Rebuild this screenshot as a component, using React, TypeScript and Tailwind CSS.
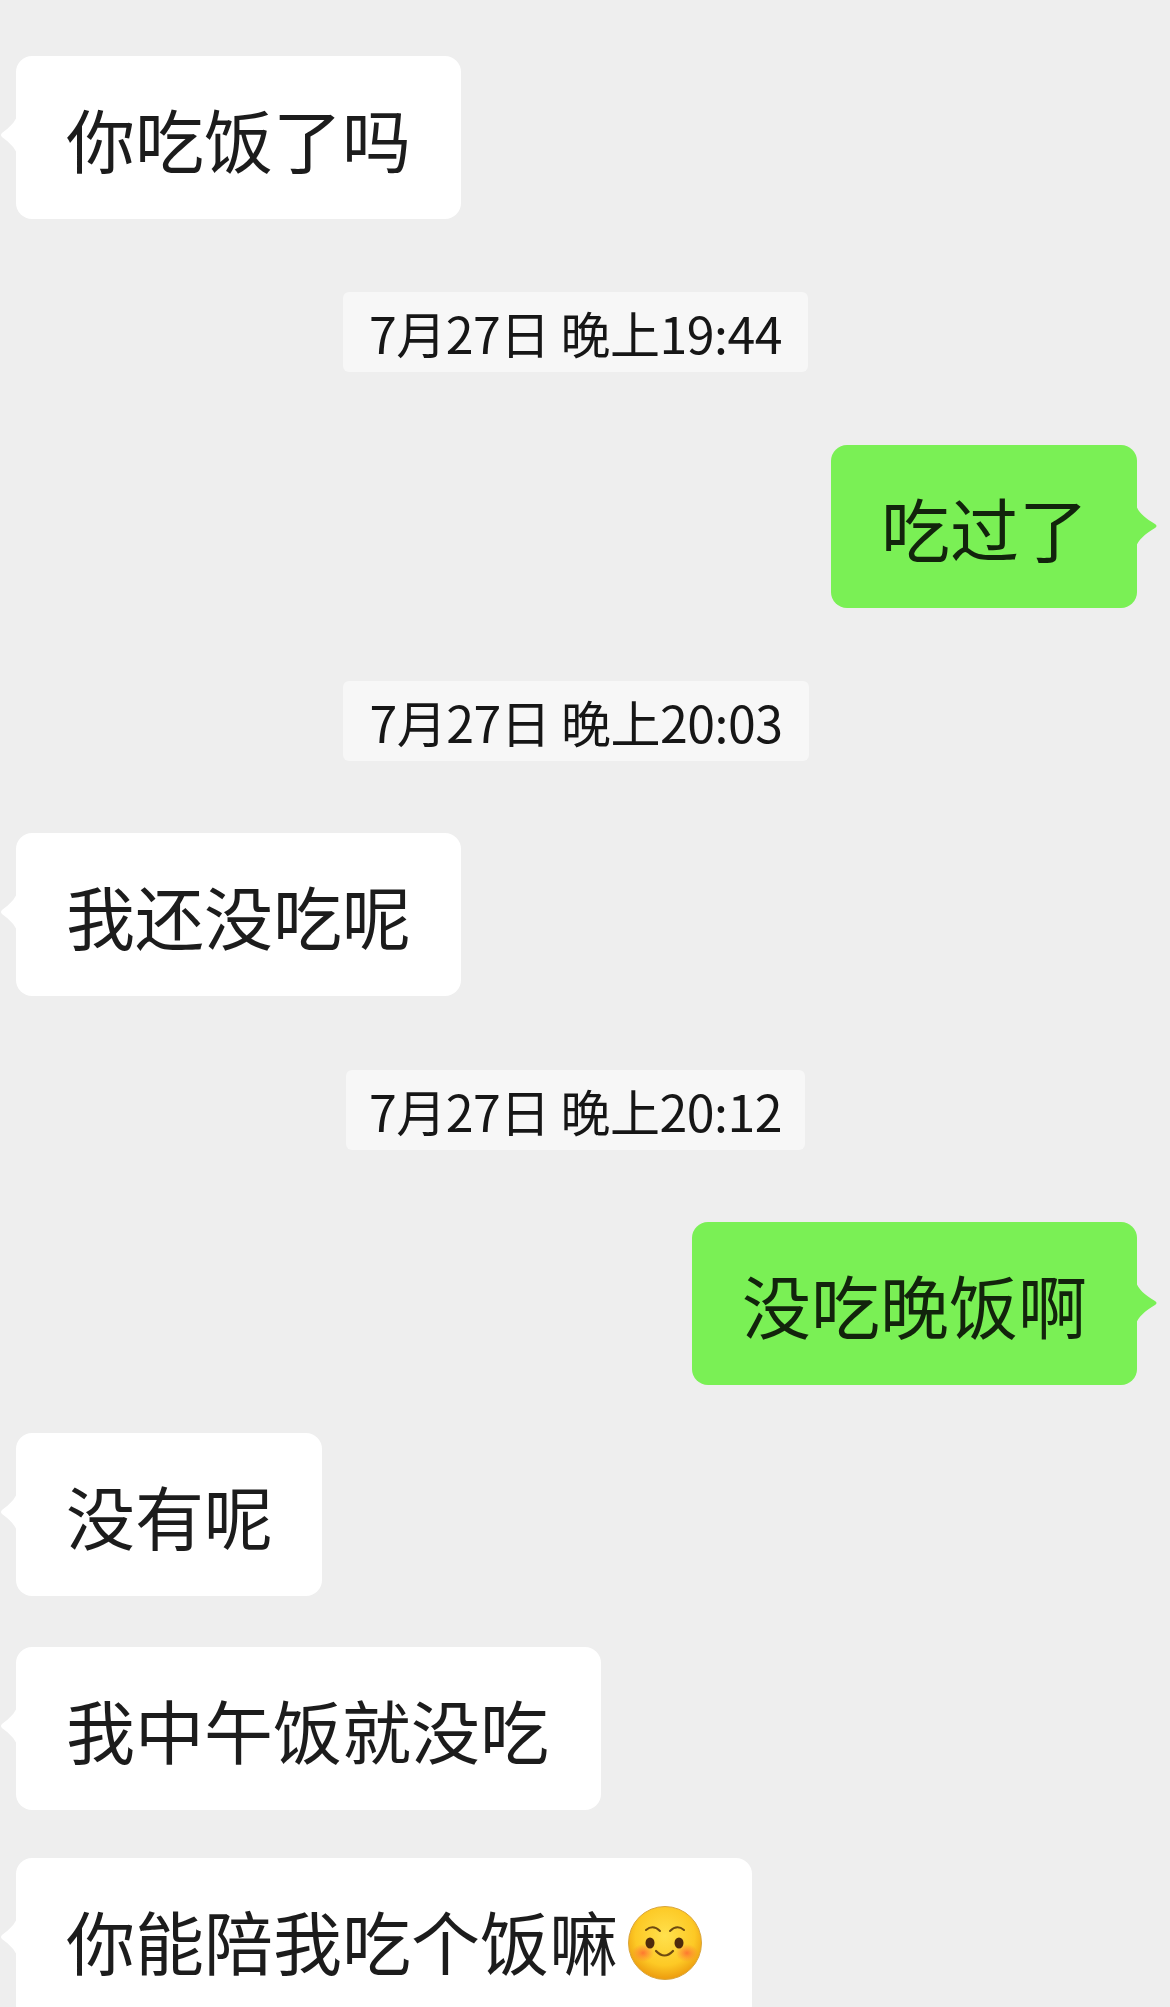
const font = { fontFamily: '"Noto Sans CJK SC", "Noto Sans", sans-serif' };

function Emoji() {
  return (
    <svg viewBox="0 0 74 74" className="inline-block w-[74px] h-[74px] shrink-0 ml-[10px] translate-y-[2px]">
      <defs>
        <radialGradient id="face" cx="50%" cy="40%" r="58%">
          <stop offset="0%" stopColor="#ffe14d" />
          <stop offset="70%" stopColor="#fdc925" />
          <stop offset="100%" stopColor="#ee9f10" />
        </radialGradient>
        <radialGradient id="blush">
          <stop offset="0%" stopColor="#ff6f30" stopOpacity="0.9" />
          <stop offset="100%" stopColor="#ff7d3c" stopOpacity="0" />
        </radialGradient>
      </defs>
      <circle cx="37" cy="37" r="36.5" fill="url(#face)" stroke="#d9a53c" strokeWidth="1" />
      <ellipse cx="15" cy="47" rx="11" ry="9" fill="url(#blush)" />
      <ellipse cx="59" cy="47" rx="11" ry="9" fill="url(#blush)" />
      <path d="M18 24 Q25 18 32 25" fill="none" stroke="#6e4a10" strokeWidth="2" strokeLinecap="round" />
      <path d="M42 25 Q49 18 56 24" fill="none" stroke="#6e4a10" strokeWidth="2" strokeLinecap="round" />
      <ellipse cx="22" cy="37" rx="4.5" ry="5.5" fill="#4e2a0c" />
      <ellipse cx="51" cy="37" rx="4.5" ry="5.5" fill="#4e2a0c" />
      <path d="M28 45 Q36.5 54 45 45" fill="none" stroke="#6e4a10" strokeWidth="2.2" strokeLinecap="round" />
    </svg>
  );
}

function Left({ children, w, mt }: { children: React.ReactNode; w: string; mt: string }) {
  return (
    <div className={`relative ml-4 ${w} ${mt} h-[163px] shrink-0 rounded-[16px] bg-white flex items-center pl-[50px] pt-[2px] text-[69px] leading-none text-[#1c1c1c] whitespace-nowrap`}>
      <svg viewBox="0 0 17 38" className="absolute -left-4 top-[60px] w-[17px] h-[38px]">
        <path d="M17 0 C15 6 10 11 2 17 Q0 19 2 21 C10 27 15 32 17 38 Z" fill="#ffffff" />
      </svg>
      {children}
    </div>
  );
}

function Right({ children, w, mt }: { children: React.ReactNode; w: string; mt: string }) {
  return (
    <div className={`relative self-end mr-[33px] ${w} ${mt} h-[163px] shrink-0 rounded-[16px] bg-[#7af055] flex items-center pl-[50px] pt-[2px] text-[69px] leading-none text-[#12240c] whitespace-nowrap`}>
      <svg viewBox="0 0 22 42" className="absolute -right-[21px] top-[60px] w-[22px] h-[42px]">
        <path d="M0 0 C2 7 9 13 19 19 Q22 21 19 23 C9 29 2 35 0 42 Z" fill="#7af055" />
      </svg>
      {children}
    </div>
  );
}

function Time({ children, w, mt, ml }: { children: React.ReactNode; w: string; mt: string; ml: string }) {
  return (
    <div className={`${ml} ${w} ${mt} h-[80px] shrink-0 rounded-[6px] bg-[#f7f7f7] flex items-center justify-center text-[50px] leading-none tracking-[-0.5px] text-[#161616] whitespace-nowrap`}>
      {children}
    </div>
  );
}

export default function App() {
  return (
    <div style={font} className="w-[1170px] h-[2007px] overflow-hidden bg-[#eeeeee] flex flex-col pt-[56px]">
      <Left w="w-[445px]" mt="mt-0">你吃饭了吗</Left>
      <Time w="w-[465px]" ml="ml-[343px]" mt="mt-[73px]">7月27日 晚上19:44</Time>
      <Right w="w-[306px]" mt="mt-[73px]">吃过了</Right>
      <Time w="w-[466px]" ml="ml-[343px]" mt="mt-[73px]">7月27日 晚上20:03</Time>
      <Left w="w-[445px]" mt="mt-[72px]">我还没吃呢</Left>
      <Time w="w-[459px]" ml="ml-[346px]" mt="mt-[74px]">7月27日 晚上20:12</Time>
      <Right w="w-[445px]" mt="mt-[72px]">没吃晚饭啊</Right>
      <Left w="w-[306px]" mt="mt-[48px]">没有呢</Left>
      <Left w="w-[585px]" mt="mt-[51px]">我中午饭就没吃</Left>
      <Left w="w-[736px]" mt="mt-[48px]">
        你能陪我吃个饭嘛
        <Emoji />
      </Left>
    </div>
  );
}
